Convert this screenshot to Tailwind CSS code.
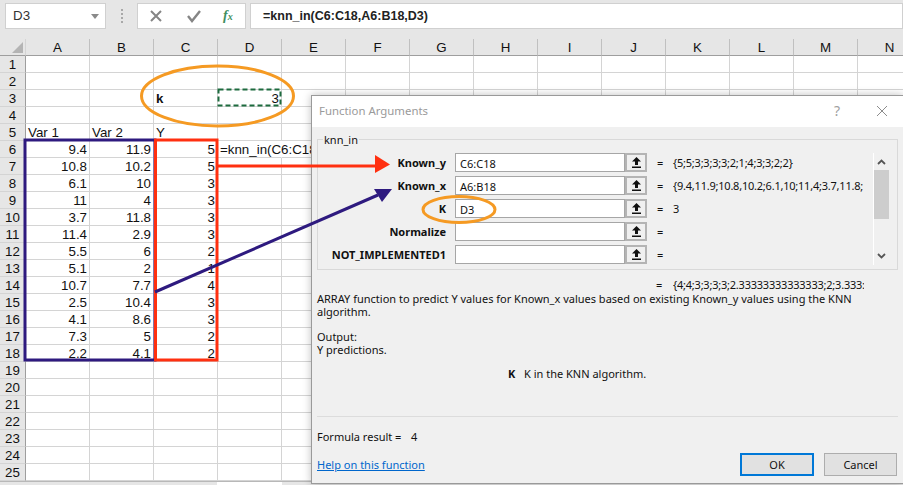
<!DOCTYPE html>
<html>
<head>
<meta charset="utf-8">
<script src="https://cdn.jsdelivr.net/npm/@tailwindcss/browser@4"></script>
</head>
<body class="m-0 bg-white">
<div class="relative w-[903px] h-[485px] overflow-hidden bg-white font-['Liberation_Sans',sans-serif] text-[13.33px] text-[#111]">

  <!-- Formula bar -->
  <div class="flex h-[39px] pt-[3px] pl-[5px] bg-[#e6e6e6] items-start">
    <div class="flex items-center justify-between w-[101px] h-[26px] pl-[7px] pr-[6px] bg-white border border-[#d0d0d0] text-[#333]">
      <span>D3</span>
      <svg width="8" height="5" viewBox="0 0 8 5"><path d="M0 0h8L4 5z" fill="#8a8a8a"/></svg>
    </div>
    <div class="flex flex-col gap-[2px] w-[31px] h-[26px] items-center justify-center">
      <i class="w-[2px] h-[2px] bg-[#a8a8a8]"></i><i class="w-[2px] h-[2px] bg-[#a8a8a8]"></i><i class="w-[2px] h-[2px] bg-[#a8a8a8]"></i><i class="w-[2px] h-[2px] bg-[#a8a8a8]"></i>
    </div>
    <div class="flex items-center w-[109px] h-[26px] bg-white border border-[#d0d0d0] pl-[11px]">
      <svg width="14" height="14" viewBox="0 0 14 14"><path d="M2 2l10 10M12 2L2 12" stroke="#858585" stroke-width="2" fill="none"/></svg>
      <svg class="ml-[23px]" width="16" height="14" viewBox="0 0 16 14"><path d="M2 7l4 5 8-10" stroke="#858585" stroke-width="2.4" fill="none"/></svg>
      <span class="ml-[21px] font-['Liberation_Serif',serif] italic font-bold text-[14px] leading-none text-[#3f8f5f]">f<span class="text-[10px]">x</span></span>
    </div>
    <div class="flex items-center flex-1 h-[26px] ml-[4px] pl-[12px] bg-white border border-[#d0d0d0] text-[12.5px] font-bold text-[#222]">=knn_in(C6:C18,A6:B18,D3)</div>
  </div>

  <!-- Sheet -->
  <div class="grid grid-cols-[26px_repeat(14,64px)] auto-rows-[17px] w-[922px] leading-[17px] [&>div]:border-r [&>div]:border-b [&>div]:border-[#d4d4d4] [&>div]:px-[2px] [&>div]:whitespace-nowrap">
    <div class="relative bg-[#e6e6e6] !border-b-[#9e9e9e]"><svg class="absolute right-[2px] bottom-[2px]" width="11" height="11" viewBox="0 0 11 11"><path d="M11 0v11H0z" fill="#b4b4b4"/></svg></div>
    <div class="bg-[#e6e6e6] text-center !border-b-[#9e9e9e] !border-r-[#c0c0c0]">A</div><div class="bg-[#e6e6e6] text-center !border-b-[#9e9e9e] !border-r-[#c0c0c0]">B</div><div class="bg-[#e6e6e6] text-center !border-b-[#9e9e9e] !border-r-[#c0c0c0]">C</div><div class="bg-[#e6e6e6] text-center !border-b-[#9e9e9e] !border-r-[#c0c0c0]">D</div><div class="bg-[#e6e6e6] text-center !border-b-[#9e9e9e] !border-r-[#c0c0c0]">E</div><div class="bg-[#e6e6e6] text-center !border-b-[#9e9e9e] !border-r-[#c0c0c0]">F</div><div class="bg-[#e6e6e6] text-center !border-b-[#9e9e9e] !border-r-[#c0c0c0]">G</div><div class="bg-[#e6e6e6] text-center !border-b-[#9e9e9e] !border-r-[#c0c0c0]">H</div><div class="bg-[#e6e6e6] text-center !border-b-[#9e9e9e] !border-r-[#c0c0c0]">I</div><div class="bg-[#e6e6e6] text-center !border-b-[#9e9e9e] !border-r-[#c0c0c0]">J</div><div class="bg-[#e6e6e6] text-center !border-b-[#9e9e9e] !border-r-[#c0c0c0]">K</div><div class="bg-[#e6e6e6] text-center !border-b-[#9e9e9e] !border-r-[#c0c0c0]">L</div><div class="bg-[#e6e6e6] text-center !border-b-[#9e9e9e] !border-r-[#c0c0c0]">M</div><div class="bg-[#e6e6e6] text-center !border-b-[#9e9e9e] !border-r-[#c0c0c0]">N</div>

    <div class="bg-[#e6e6e6] text-center !border-r-[#9e9e9e]">1</div><div></div><div></div><div></div><div></div><div></div><div></div><div></div><div></div><div></div><div></div><div></div><div></div><div></div><div></div>
    <div class="bg-[#e6e6e6] text-center !border-r-[#9e9e9e]">2</div><div></div><div></div><div></div><div></div><div></div><div></div><div></div><div></div><div></div><div></div><div></div><div></div><div></div><div></div>
    <div class="bg-[#e6e6e6] text-center !border-r-[#9e9e9e]">3</div><div></div><div></div><div class="font-bold">k</div><div class="text-right">3</div><div></div><div></div><div></div><div></div><div></div><div></div><div></div><div></div><div></div><div></div>
    <div class="bg-[#e6e6e6] text-center !border-r-[#9e9e9e]">4</div><div></div><div></div><div></div><div></div><div></div><div></div><div></div><div></div><div></div><div></div><div></div><div></div><div></div><div></div>
    <div class="bg-[#e6e6e6] text-center !border-r-[#9e9e9e]">5</div><div>Var 1</div><div>Var 2</div><div>Y</div><div></div><div></div><div></div><div></div><div></div><div></div><div></div><div></div><div></div><div></div><div></div>
    <div class="bg-[#e6e6e6] text-center !border-r-[#9e9e9e]">6</div><div class="text-right">9.4</div><div class="text-right">11.9</div><div class="text-right">5</div><div class="overflow-visible !border-r-transparent">=knn_in(C6:C18</div><div></div><div></div><div></div><div></div><div></div><div></div><div></div><div></div><div></div><div></div>
    <div class="bg-[#e6e6e6] text-center !border-r-[#9e9e9e]">7</div><div class="text-right">10.8</div><div class="text-right">10.2</div><div class="text-right">5</div><div></div><div></div><div></div><div></div><div></div><div></div><div></div><div></div><div></div><div></div><div></div>
    <div class="bg-[#e6e6e6] text-center !border-r-[#9e9e9e]">8</div><div class="text-right">6.1</div><div class="text-right">10</div><div class="text-right">3</div><div></div><div></div><div></div><div></div><div></div><div></div><div></div><div></div><div></div><div></div><div></div>
    <div class="bg-[#e6e6e6] text-center !border-r-[#9e9e9e]">9</div><div class="text-right">11</div><div class="text-right">4</div><div class="text-right">3</div><div></div><div></div><div></div><div></div><div></div><div></div><div></div><div></div><div></div><div></div><div></div>
    <div class="bg-[#e6e6e6] text-center !border-r-[#9e9e9e]">10</div><div class="text-right">3.7</div><div class="text-right">11.8</div><div class="text-right">3</div><div></div><div></div><div></div><div></div><div></div><div></div><div></div><div></div><div></div><div></div><div></div>
    <div class="bg-[#e6e6e6] text-center !border-r-[#9e9e9e]">11</div><div class="text-right">11.4</div><div class="text-right">2.9</div><div class="text-right">3</div><div></div><div></div><div></div><div></div><div></div><div></div><div></div><div></div><div></div><div></div><div></div>
    <div class="bg-[#e6e6e6] text-center !border-r-[#9e9e9e]">12</div><div class="text-right">5.5</div><div class="text-right">6</div><div class="text-right">2</div><div></div><div></div><div></div><div></div><div></div><div></div><div></div><div></div><div></div><div></div><div></div>
    <div class="bg-[#e6e6e6] text-center !border-r-[#9e9e9e]">13</div><div class="text-right">5.1</div><div class="text-right">2</div><div class="text-right">1</div><div></div><div></div><div></div><div></div><div></div><div></div><div></div><div></div><div></div><div></div><div></div>
    <div class="bg-[#e6e6e6] text-center !border-r-[#9e9e9e]">14</div><div class="text-right">10.7</div><div class="text-right">7.7</div><div class="text-right">4</div><div></div><div></div><div></div><div></div><div></div><div></div><div></div><div></div><div></div><div></div><div></div>
    <div class="bg-[#e6e6e6] text-center !border-r-[#9e9e9e]">15</div><div class="text-right">2.5</div><div class="text-right">10.4</div><div class="text-right">3</div><div></div><div></div><div></div><div></div><div></div><div></div><div></div><div></div><div></div><div></div><div></div>
    <div class="bg-[#e6e6e6] text-center !border-r-[#9e9e9e]">16</div><div class="text-right">4.1</div><div class="text-right">8.6</div><div class="text-right">3</div><div></div><div></div><div></div><div></div><div></div><div></div><div></div><div></div><div></div><div></div><div></div>
    <div class="bg-[#e6e6e6] text-center !border-r-[#9e9e9e]">17</div><div class="text-right">7.3</div><div class="text-right">5</div><div class="text-right">2</div><div></div><div></div><div></div><div></div><div></div><div></div><div></div><div></div><div></div><div></div><div></div>
    <div class="bg-[#e6e6e6] text-center !border-r-[#9e9e9e]">18</div><div class="text-right">2.2</div><div class="text-right">4.1</div><div class="text-right">2</div><div></div><div></div><div></div><div></div><div></div><div></div><div></div><div></div><div></div><div></div><div></div>
    <div class="bg-[#e6e6e6] text-center !border-r-[#9e9e9e]">19</div><div></div><div></div><div></div><div></div><div></div><div></div><div></div><div></div><div></div><div></div><div></div><div></div><div></div><div></div>
    <div class="bg-[#e6e6e6] text-center !border-r-[#9e9e9e]">20</div><div></div><div></div><div></div><div></div><div></div><div></div><div></div><div></div><div></div><div></div><div></div><div></div><div></div><div></div>
    <div class="bg-[#e6e6e6] text-center !border-r-[#9e9e9e]">21</div><div></div><div></div><div></div><div></div><div></div><div></div><div></div><div></div><div></div><div></div><div></div><div></div><div></div><div></div>
    <div class="bg-[#e6e6e6] text-center !border-r-[#9e9e9e]">22</div><div></div><div></div><div></div><div></div><div></div><div></div><div></div><div></div><div></div><div></div><div></div><div></div><div></div><div></div>
    <div class="bg-[#e6e6e6] text-center !border-r-[#9e9e9e]">23</div><div></div><div></div><div></div><div></div><div></div><div></div><div></div><div></div><div></div><div></div><div></div><div></div><div></div><div></div>
    <div class="bg-[#e6e6e6] text-center !border-r-[#9e9e9e]">24</div><div></div><div></div><div></div><div></div><div></div><div></div><div></div><div></div><div></div><div></div><div></div><div></div><div></div><div></div>
    <div class="bg-[#e6e6e6] text-center !border-r-[#9e9e9e]">25</div><div></div><div></div><div></div><div></div><div></div><div></div><div></div><div></div><div></div><div></div><div></div><div></div><div></div><div></div>
  </div>

  <!-- Sheet tab strip -->
  <div class="flex h-[5px] bg-[#e6e6e6] border-t border-[#b8b8b8]">
    <div class="ml-[217px] w-[65px] bg-white"></div>
  </div>

  <!-- Dialog -->
  <div class="absolute left-[311px] top-[95px] w-[592px] h-[389px] flex flex-col bg-[#f0f0f0] border-l border-t border-b border-[#9a9a9a] shadow-[0_0_8px_rgba(0,0,0,0.25)] font-['Noto_Sans',sans-serif] text-[11px] leading-[13px] text-[#111]">
    <div class="flex items-center h-[31px] shrink-0 bg-white pl-[7px] pb-[2px] text-[11.4px] text-[#9a9a9a]">
      <span class="flex-1">Function Arguments</span>
      <span class="mr-[36px] text-[14px] text-[#a0a0a0]">?</span>
      <svg class="mr-[15px]" width="12" height="12" viewBox="0 0 12 12"><path d="M1 1l10 10M11 1L1 11" stroke="#8c8c8c" stroke-width="1" fill="none"/></svg>
    </div>
    <div class="relative mt-[12px] ml-[5px] w-[581px] h-[131px] shrink-0 border border-[#d9d9d9]">
      <span class="absolute left-[5px] -top-[7px] px-[1px] bg-[#f0f0f0]">knn_in</span>
      <div class="flex flex-col gap-[4px] pt-[13px]">
        <div class="flex items-center h-[19px]">
          <span class="w-[128px] text-right font-bold">Known_y</span>
          <div class="ml-[9px] flex items-center w-[170px] h-[19px] pl-[4px] pt-[1px] bg-white border border-[#a6a6a6]">C6:C18</div>
          <div class="flex items-center justify-center w-[22px] h-[19px] bg-[#f0f0f0] border-2 border-[#b4b4b4]"><svg width="9" height="11" viewBox="0 0 9 11"><path d="M4.5 0L9 4.5H6V8H3V4.5H0zM0 9.5h9V11H0z" fill="#111"/></svg></div>
          <span class="ml-[10px] w-[16px]">=</span>
          <span class="whitespace-nowrap tracking-[-0.22px]">{5;5;3;3;3;3;2;1;4;3;3;2;2}</span>
        </div>
        <div class="flex items-center h-[19px]">
          <span class="w-[128px] text-right font-bold">Known_x</span>
          <div class="ml-[9px] flex items-center w-[170px] h-[19px] pl-[4px] pt-[1px] bg-white border border-[#a6a6a6]">A6:B18</div>
          <div class="flex items-center justify-center w-[22px] h-[19px] bg-[#f0f0f0] border-2 border-[#b4b4b4]"><svg width="9" height="11" viewBox="0 0 9 11"><path d="M4.5 0L9 4.5H6V8H3V4.5H0zM0 9.5h9V11H0z" fill="#111"/></svg></div>
          <span class="ml-[10px] w-[16px]">=</span>
          <span class="w-[191px] overflow-hidden whitespace-nowrap tracking-[-0.22px]">{9.4,11.9;10.8,10.2;6.1,10;11,4;3.7,11.8;</span>
        </div>
        <div class="flex items-center h-[19px]">
          <span class="w-[128px] text-right font-bold">K</span>
          <div class="ml-[9px] flex items-center w-[170px] h-[19px] pl-[4px] pt-[1px] bg-white border border-[#a6a6a6]">D3</div>
          <div class="flex items-center justify-center w-[22px] h-[19px] bg-[#f0f0f0] border-2 border-[#b4b4b4]"><svg width="9" height="11" viewBox="0 0 9 11"><path d="M4.5 0L9 4.5H6V8H3V4.5H0zM0 9.5h9V11H0z" fill="#111"/></svg></div>
          <span class="ml-[10px] w-[16px]">=</span>
          <span>3</span>
        </div>
        <div class="flex items-center h-[19px]">
          <span class="w-[128px] text-right font-bold">Normalize</span>
          <div class="ml-[9px] w-[170px] h-[19px] bg-white border border-[#a6a6a6]"></div>
          <div class="flex items-center justify-center w-[22px] h-[19px] bg-[#f0f0f0] border-2 border-[#b4b4b4]"><svg width="9" height="11" viewBox="0 0 9 11"><path d="M4.5 0L9 4.5H6V8H3V4.5H0zM0 9.5h9V11H0z" fill="#111"/></svg></div>
          <span class="ml-[10px] w-[16px]">=</span>
        </div>
        <div class="flex items-center h-[19px]">
          <span class="w-[128px] text-right font-bold whitespace-nowrap">NOT_IMPLEMENTED1</span>
          <div class="ml-[9px] w-[170px] h-[19px] bg-white border border-[#a6a6a6]"></div>
          <div class="flex items-center justify-center w-[22px] h-[19px] bg-[#f0f0f0] border-2 border-[#b4b4b4]"><svg width="9" height="11" viewBox="0 0 9 11"><path d="M4.5 0L9 4.5H6V8H3V4.5H0zM0 9.5h9V11H0z" fill="#111"/></svg></div>
          <span class="ml-[10px] w-[16px]">=</span>
        </div>
      </div>
      <!-- argument scrollbar -->
      <div class="absolute left-[555px] top-[13px] bottom-[4px] w-[16px] flex flex-col items-center justify-between bg-[#f0f0f0] border-l border-white">
        <svg class="mt-[6px]" width="9" height="6" viewBox="0 0 9 6"><path d="M1 5l3.500-3.500L8 5" stroke="#555" stroke-width="1.8" fill="none"/></svg>
        <div class="absolute left-0 top-[17px] w-[15px] h-[49px] bg-[#cdcdcd]"></div>
        <svg class="mb-[6px]" width="9" height="6" viewBox="0 0 9 6"><path d="M1 1l3.500 3.500L8 1" stroke="#555" stroke-width="1.8" fill="none"/></svg>
      </div>
    </div>
    <div class="flex mt-[8px] ml-[344px] h-[13px]">
      <span class="w-[17px]">=</span>
      <span class="w-[191px] overflow-hidden whitespace-nowrap tracking-[-0.22px]">{4;4;3;3;3;3;2.33333333333333;2;3.333:</span>
    </div>
    <p class="mt-[1px] ml-[5px] w-[560px]">ARRAY function to predict Y values for Known_x values based on existing Known_y values using the KNN algorithm.</p>
    <p class="mt-[12px] ml-[5px]">Output:<br>Y predictions.</p>
    <p class="flex mt-[11px] ml-[196px]"><b class="w-[16px]">K</b><span>K in the KNN algorithm.</span></p>
    <div class="mt-[36px] ml-[5px] w-[581px] h-px bg-[#dcdcdc]"></div>
    <div class="mt-[13px] ml-[5px] flex"><span class="w-[94px] whitespace-nowrap">Formula result =</span><span>4</span></div>
    <div class="flex items-center mt-[10px] ml-[5px]">
      <a class="flex-1 text-[#0066cc] underline">Help on this function</a>
      <div class="flex items-center justify-center w-[74px] h-[23px] bg-[#e1e1e1] border-2 border-[#0078d7]">OK</div>
      <div class="flex items-center justify-center ml-[10px] mr-[6px] w-[73px] h-[23px] bg-[#e1e1e1] border border-[#adadad]">Cancel</div>
    </div>
  </div>

  <!-- Annotations -->
  <svg class="absolute left-0 top-0 pointer-events-none" width="903" height="485" viewBox="0 0 903 485">
    <rect x="218.500" y="89.500" width="62" height="16" fill="none" stroke="#1d6b3e" stroke-width="2" stroke-dasharray="5 3"/>
    <ellipse cx="217.500" cy="96" rx="76" ry="30" fill="none" stroke="#f59a23" stroke-width="3"/>
    <ellipse cx="459" cy="209.500" rx="36" ry="13" fill="none" stroke="#f59a23" stroke-width="3"/>
    <rect x="25" y="140" width="130" height="220" fill="none" stroke="#2e1a7f" stroke-width="3"/>
    <rect x="155.500" y="140" width="61.500" height="220" fill="none" stroke="#ff3010" stroke-width="3"/>
    <path d="M218 166H378" stroke="#ff3010" stroke-width="3" fill="none"/>
    <path d="M390 164.500L375 155V173z" fill="#ff3010"/>
    <path d="M155 292L378 195" stroke="#2e1a7f" stroke-width="3" fill="none"/>
    <path d="M392 189L374 189L382 202z" fill="#2e1a7f"/>
  </svg>
</div>
</body>
</html>
